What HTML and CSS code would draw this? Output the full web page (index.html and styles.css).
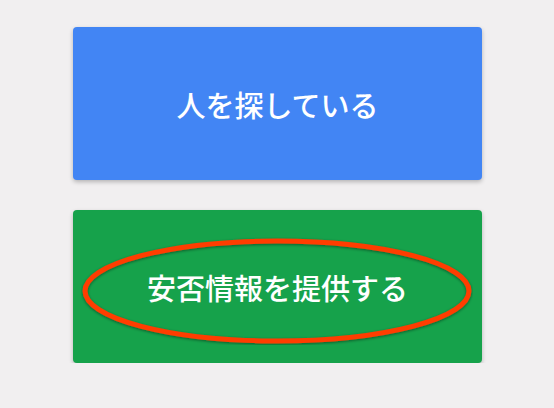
FILE: index.html
```html
<!DOCTYPE html>
<html lang="ja">
<head>
<meta charset="utf-8">
<link rel="stylesheet" href="styles.css">
</head>
<body>
<main class="page">
  <button class="btn btn-blue">人を探している</button>
  <div class="btn-wrap">
    <button class="btn btn-green">安否情報を提供する</button>
    <svg class="circle" width="392" height="108" viewBox="0 0 392 108">
      <defs>
        <filter id="sh" x="-10%" y="-20%" width="120%" height="140%">
          <feDropShadow dx="0" dy="1" stdDeviation="1.5" flood-color="#000" flood-opacity="0.45"/>
        </filter>
      </defs>
      <ellipse cx="196" cy="54" rx="192" ry="50" fill="none" stroke="#ff3c00" stroke-width="5" filter="url(#sh)"/>
    </svg>
  </div>
</main>
</body>
</html>
```
FILE: styles.css
```css
html, body {
  margin: 0;
  padding: 0;
  background: #f1eff0;
}
.page {
  display: flex;
  flex-direction: column;
  align-items: flex-start;
  gap: 30px;
  padding: 27px 0 0 73px;
}
.btn {
  width: 409px;
  height: 153px;
  border: none;
  border-radius: 4px;
  color: #fff;
  font-family: "Noto Sans CJK JP", "Noto Sans", sans-serif;
  font-size: 29px;
  font-weight: 500;
  box-shadow: 0 2px 4px rgba(0,0,0,0.25);
  padding: 0;
  display: flex;
  align-items: center;
  justify-content: center;
}
.btn-blue { background: #4285f4; }
.btn-green { background: #16a24b; }
.btn-wrap {
  position: relative;
}
.circle {
  position: absolute;
  left: 8px;
  top: 27px;
  pointer-events: none;
}
```
